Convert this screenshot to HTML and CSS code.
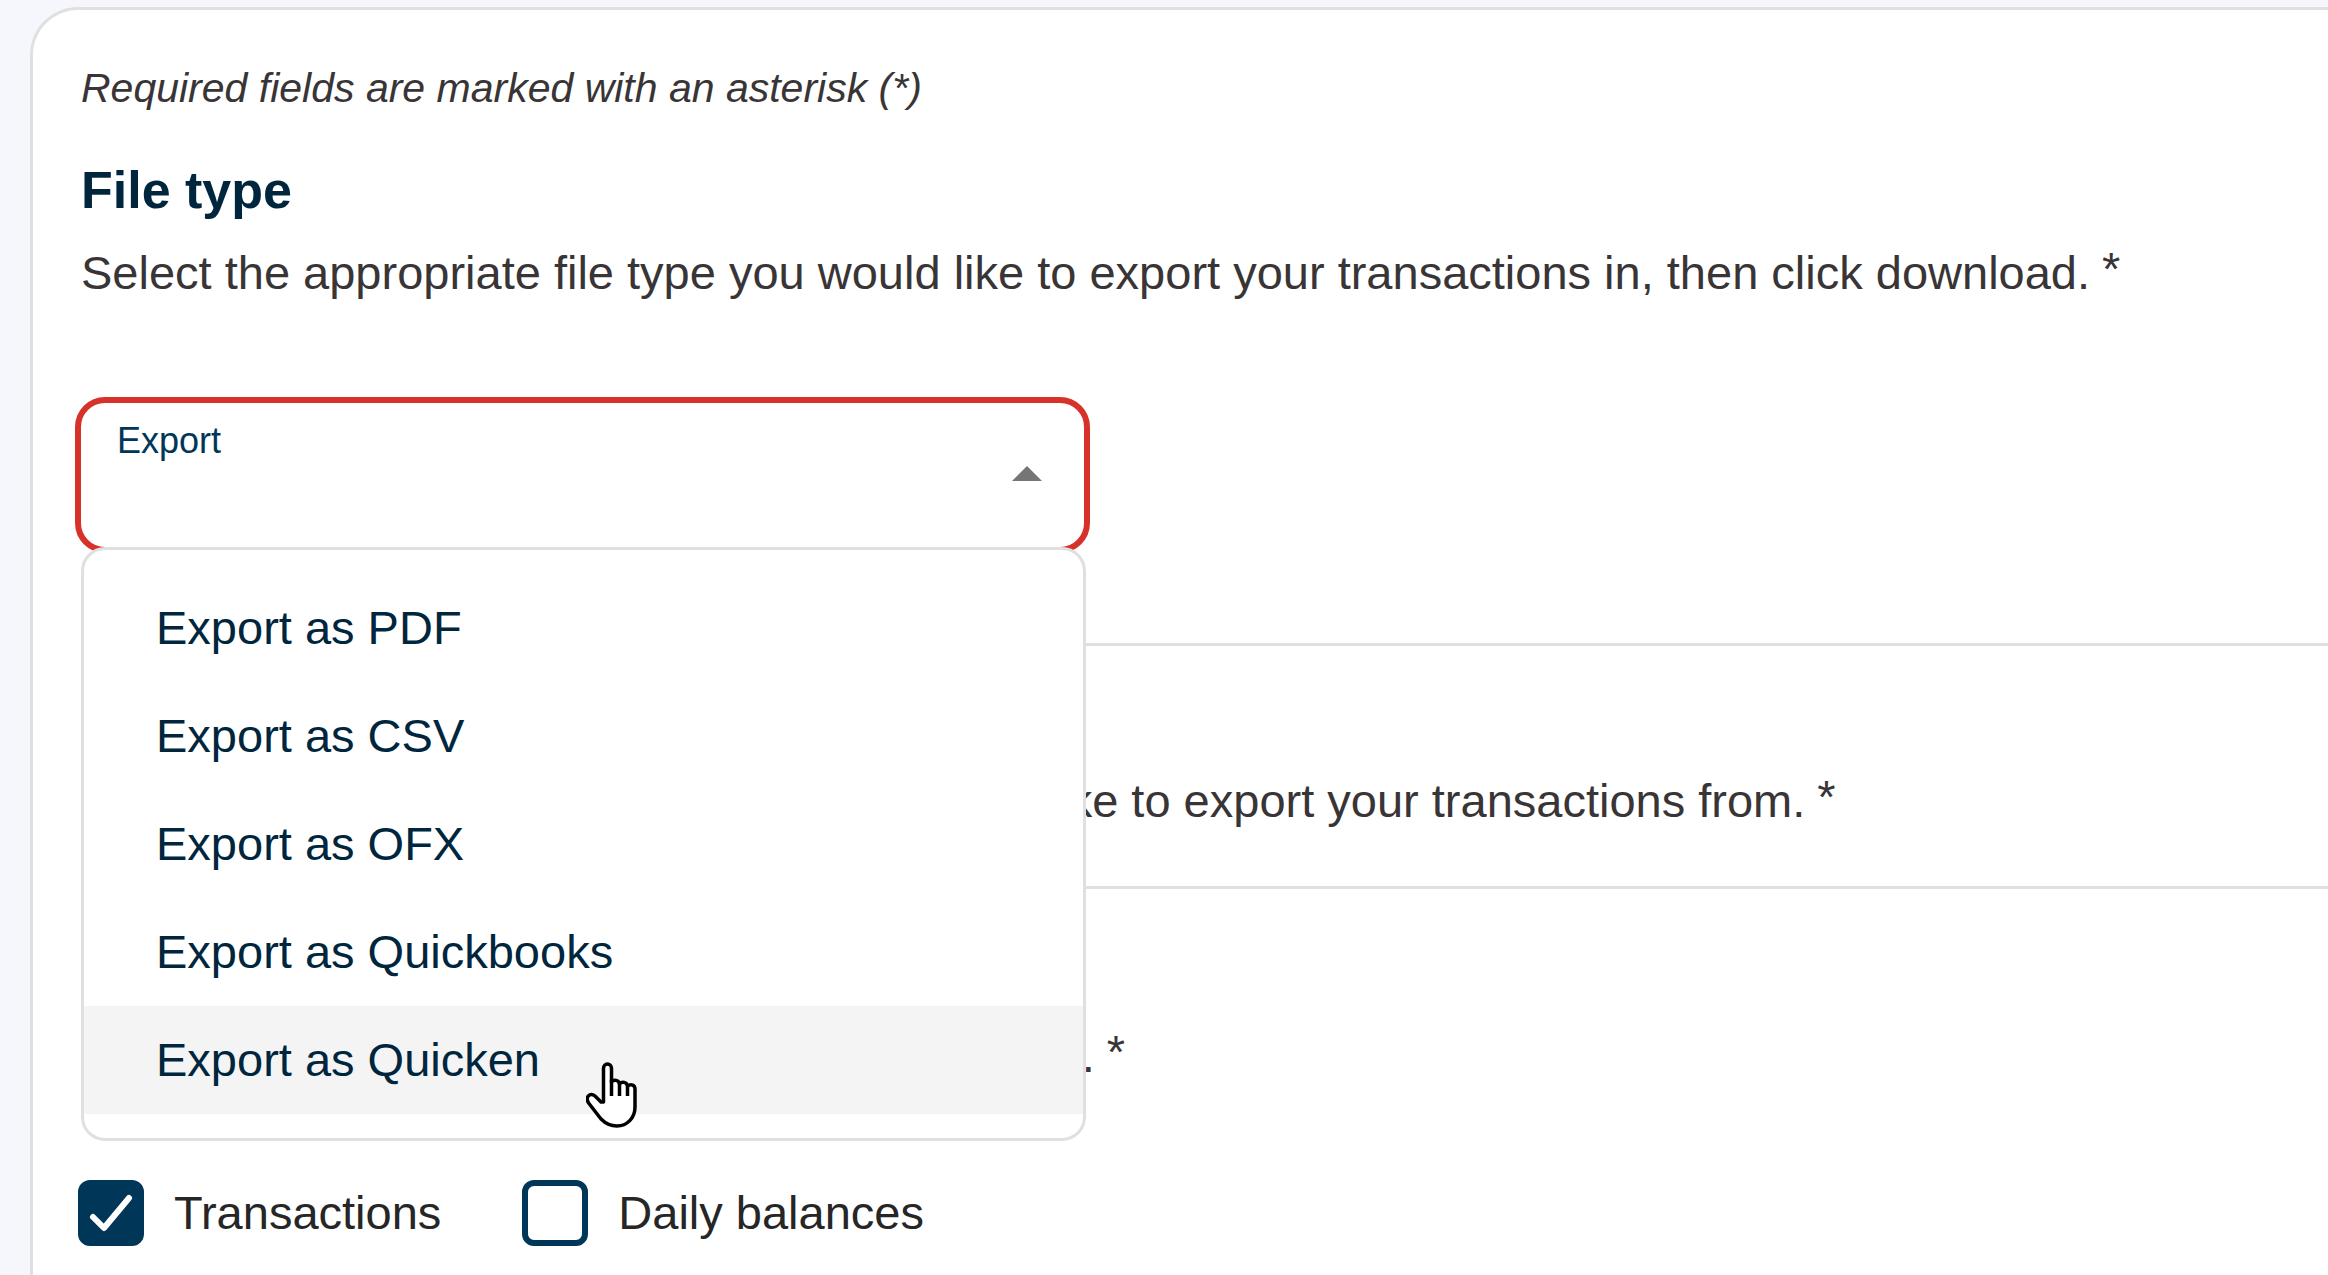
FILE: index.html
```html
<!DOCTYPE html>
<html lang="en">
<head>
    <meta charset="UTF-8">
    <meta name="viewport" content="width=device-width, initial-scale=1.0">
    <title>Export transactions</title>
    <link rel="stylesheet" href="styles.css">
</head>
<body>

    <form class="card">
        <p class="note">Required fields are marked with an asterisk (*)</p>

        <section class="fileType">
            <h2>File type</h2>
            <p>Select the appropriate file type you would like to export your transactions in, then click download.<span class="star">*</span></p>
            <div class="field">
                <label for="export">Export</label>
                <select id="export" required>
                    <option value=""></option>
                    <option value="pdf">Export as PDF</option>
                    <option value="csv">Export as CSV</option>
                    <option value="ofx">Export as OFX</option>
                    <option value="quickbooks">Export as Quickbooks</option>
                    <option value="quicken">Export as Quicken</option>
                </select>
                <div class="arrow"></div>
                <!-- open menu, covers the sections below -->
                <ul class="menu">
                    <li><button type="button">Export as PDF</button></li>
                    <li><button type="button">Export as CSV</button></li>
                    <li><button type="button">Export as OFX</button></li>
                    <li><button type="button">Export as Quickbooks</button></li>
                    <li class="active"><button type="button">Export as Quicken</button>
                        <svg class="pointer" viewBox="0 0 52 66" width="52" height="66">
                            <path d="M17.500 40V6.500C17.500 .5 25.500 .5 25.500 6.500V20C28 17 33 18 33.500 22C36 19 41 20 41.500 24C45 21.500 49 23 49 27V45C49 56 41 64 31 64C24 64 19 61 15 57L3 41.500C-1.500 35 4 30 9 34L15 40Z" fill="#fff" stroke="#000" stroke-width="3.500" stroke-linejoin="round"/>
                            <path d="M25.500 18V34M33.500 20V34M41.500 22V34" fill="none" stroke="#000" stroke-width="3.500"/>
                        </svg>
                    </li>
                </ul>
            </div>
        </section>

        <section class="dates">
            <h2>Date range</h2>
            <p>Choose the appropriate date range you would like to export your transactions from.<span class="star">*</span></p>
        </section>

        <section class="details">
            <h2>Data</h2>
            <p>Choose the kind of data you would like to export.<span class="star">*</span></p>
            <div class="checks">
                <label><input type="checkbox" checked>Transactions</label>
                <label><input type="checkbox">Daily balances</label>
            </div>
        </section>
    </form>

</body>
</html>
```
FILE: styles.css
```css
*{
    box-sizing: border-box;
}
body{
    margin: 0;
    padding: 7px 0 0 30px;
    background: #f6f7fc;
    color: #393536;
    font-family: "Liberation Sans", Arial, sans-serif;
    font-size: 47px;
    line-height: 72px;
}
h2,p,ul{
    margin: 0;
}
/* the card runs off the right and the bottom of the window */
.card{
    min-height: calc(100vh - 7px);
    padding: 48px 0 24px 48px;
    background: #fff;
    border: 3px solid #e0e0e0;
    border-right: none;
    border-bottom: none;
    border-radius: 48px 0 0 0;
}
.note{
    font-size: 41px;
    line-height: 60px;
    font-style: italic;
}
h2{
    margin-bottom: 11px;
    color: #00263e;
    font-size: 52px;
    line-height: 72px;
}
.star{
    margin-left: 12px;
    line-height: 1;
    vertical-align: 4px;
}
section{
    padding-top: 36px;
}
.fileType{
    padding-bottom: 90px;
    border-bottom: 3px solid #e0e0e0;
}
.dates{
    padding-bottom: 49px;
    border-bottom: 3px solid #e0e0e0;
}
.details{
    padding-top: 48px;
}
/*export field*/
.field{
    position: relative;
    width: 1015px;
    max-width: 100%;
    height: 156px;
    margin-top: 88px;
    margin-left: -6px;
}
.field label{
    position: absolute;
    top: 20px;
    left: 42px;
    color: #003759;
    font-size: 36px;
    line-height: 48px;
}
.field select{
    appearance: none;
    width: 100%;
    height: 100%;
    padding: 60px 96px 12px 42px;
    background: #fff;
    border: 6px solid #d63229;
    border-radius: 30px;
    color: #00263e;
    font: inherit;
    outline: none;
}
.arrow{
    position: absolute;
    top: 69px;
    right: 48px;
    border: 15px solid transparent;
    border-top: none;
    border-bottom-color: #757575;
    pointer-events: none;
}
.menu{
    position: absolute;
    z-index: 1;
    top: 150px;
    left: 6px;
    right: 4px;
    padding: 24px 0;
    background: #fff;
    border: 3px solid #e0e0e0;
    border-radius: 24px;
    list-style: none;
}
.menu li{
    position: relative;
}
.menu button{
    display: block;
    width: 100%;
    height: 108px;
    padding: 0 72px;
    background: none;
    border: none;
    color: #00263e;
    font: inherit;
    text-align: left;
}
.menu .active,.menu button:hover{
    background: #f4f4f4;
}
.pointer{
    position: absolute;
    top: 56px;
    left: 502px;
}
/*checkboxes*/
.checks{
    display: flex;
    gap: 81px;
    margin-top: 85px;
    margin-left: -3px;
    color: #262626;
}
.checks label{
    display: flex;
    align-items: center;
    gap: 30px;
}
.checks input{
    appearance: none;
    width: 66px;
    height: 66px;
    margin: 0;
    border: 6px solid #003759;
    border-radius: 12px;
}
.checks input:checked{
    background: #003759 url("data:image/svg+xml,%3Csvg xmlns='http://www.w3.org/2000/svg' viewBox='0 0 54 54'%3E%3Cpath d='M9 31l11 11L45 12' fill='none' stroke='%23fff' stroke-width='6' stroke-linecap='round' stroke-linejoin='round'/%3E%3C/svg%3E") center/54px no-repeat;
}
```
